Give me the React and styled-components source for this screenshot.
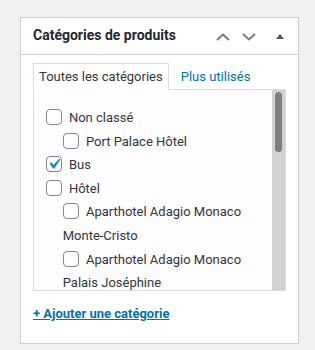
import React, { useState } from 'react'
import styled, { createGlobalStyle } from 'styled-components'

const categories = [
	{ name: 'Non classé', children: [{ name: 'Port Palace Hôtel' }] },
	{ name: 'Bus', checked: true },
	{
		name: 'Hôtel',
		children: [
			{ name: 'Aparthotel Adagio Monaco Monte-Cristo' },
			{ name: 'Aparthotel Adagio Monaco Palais Joséphine' },
			{ name: 'Columbus Monte-Carlo' },
			{ name: 'Fairmont Monte Carlo' },
			{ name: 'Hôtel Ambassador Monaco' },
			{ name: 'Hôtel de France' },
		],
	},
]

function CategoryItem({ item }) {
	const [checked, setChecked] = useState(!!item.checked)
	return (
		<Item>
			<label>
				<Check type="checkbox" checked={checked} onChange={() => setChecked(!checked)} /> {item.name}
			</label>
			{item.children && (
				<SubList>
					{item.children.map(child => <CategoryItem key={child.name} item={child} />)}
				</SubList>
			)}
		</Item>
	)
}

function App() {
	const [tab, setTab] = useState('all')
	return (
		<>
			<GlobalStyle />
			<Postbox>
				<Header>
					<Title>Catégories de produits</Title>
					<Handles>
						<HandleButton aria-label="Monter">
							<svg width="14" height="8" viewBox="0 0 14 8">
								<path d="M1 7 L7 1.5 L13 7" fill="none" stroke="#787c82" strokeWidth="2" />
							</svg>
						</HandleButton>
						<HandleButton aria-label="Descendre">
							<svg width="14" height="8" viewBox="0 0 14 8">
								<path d="M1 1 L7 6.5 L13 1" fill="none" stroke="#787c82" strokeWidth="2" />
							</svg>
						</HandleButton>
						<ToggleButton aria-label="Replier">
							<svg width="8" height="5" viewBox="0 0 8 5">
								<path d="M0 5 L4 0 L8 5 Z" fill="#50575e" />
							</svg>
						</ToggleButton>
					</Handles>
				</Header>
				<Inside>
					<Tabs>
						<Tab active={tab === 'all'} onClick={() => setTab('all')}>Toutes les catégories</Tab>
						<Tab active={tab === 'pop'} onClick={() => setTab('pop')}>Plus utilisés</Tab>
					</Tabs>
					<TabsPanel>
						<ListArea>
							<CheckList>
								{categories.map(item => <CategoryItem key={item.name} item={item} />)}
							</CheckList>
						</ListArea>
						<ScrollTrack>
							<ScrollThumb />
						</ScrollTrack>
					</TabsPanel>
					<AddLink href="#">+ Ajouter une catégorie</AddLink>
				</Inside>
			</Postbox>
		</>
	)
}

const GlobalStyle = createGlobalStyle`
	body {
		margin: 0;
		background: #f1f1f1;
		font-family: Roboto, "Liberation Sans", sans-serif;
		font-size: 13px;
		color: #3c434a;
	}
`

const Postbox = styled.div`
	margin: 17px 0 0 20px;
	width: 277px;
	height: 325px;
	background: #fff;
	border: 1px solid #ccd0d4;
	box-shadow: 0 1px 1px rgba(0, 0, 0, 0.04);
`

const Header = styled.div`
	display: flex;
	align-items: center;
	height: 36px;
	border-bottom: 1px solid #ccd0d4;
`

const Title = styled.h2`
	flex: 1;
	margin: 0;
	padding: 0 12px;
	font-size: 14px;
	font-weight: 700;
	color: #23282d;
	line-height: 1.4;
`

const Handles = styled.div`
	display: flex;
	align-items: center;
	padding-right: 14px;
	padding-top: 2px;
`

const HandleButton = styled.button`
	display: flex;
	align-items: center;
	justify-content: center;
	width: 26px;
	height: 20px;
	padding: 0;
	border: 0;
	background: none;
	cursor: pointer;
`

const ToggleButton = styled(HandleButton)`
	width: 8px;
	margin-left: 14px;
	margin-top: -1px;
`

const Inside = styled.div`
	padding: 8px 12px 0;
`

const Tabs = styled.ul`
	display: flex;
	align-items: flex-end;
	margin: 0;
	padding: 0;
	list-style: none;
`

const Tab = styled.li`
	padding: 4px 5px 5px;
	margin-right: 6px;
	line-height: 17px;
	font-size: 13px;
	border: 1px solid ${p => (p.active ? '#dcdcde' : 'transparent')};
	border-bottom: 0;
	background: ${p => (p.active ? '#fff' : 'transparent')};
	color: ${p => (p.active ? '#32373c' : '#0073aa')};
	margin-bottom: -1px;
	position: relative;
	cursor: pointer;
`

const TabsPanel = styled.div`
	display: flex;
	height: 200px;
	border: 1px solid #dcdcde;
	background: #fdfdfd;
`

const ListArea = styled.div`
	flex: 1;
	overflow: hidden;
	padding: 0 11.7px;
`

const ScrollTrack = styled.div`
	width: 13px;
	flex-shrink: 0;
	background: #d1d1d1;
	padding: 2px 3px;
	box-sizing: border-box;
`

const ScrollThumb = styled.div`
	width: 7px;
	height: 60px;
	border-radius: 4px;
	background: #808080;
`

const CheckList = styled.ul`
	margin: 0;
	padding: 16px 0 12px;
	list-style: none;
`

const SubList = styled.ul`
	margin: 0 0 0 17px;
	padding: 0;
	list-style: none;
`

const Item = styled.li`
	margin: 0;
	padding: 0;
	font-size: 13px;
	line-height: 23.6px;
	color: #32373c;
	label {
		cursor: pointer;
	}
`

const Check = styled.input`
	appearance: none;
	display: inline-block;
	vertical-align: middle;
	width: 16px;
	height: 16px;
	margin: -3px 4px 0 0;
	border: 1px solid #7e8993;
	border-radius: 4px;
	background: #fff;
	cursor: pointer;
	&:checked {
		background: #fff url("data:image/svg+xml,%3Csvg xmlns='http://www.w3.org/2000/svg' viewBox='0 0 20 20'%3E%3Cpath d='M14.83 4.89l1.34.94-5.81 8.38H9.02L5.78 9.67l1.34-1.25 2.57 2.4z' fill='%231e8cbe'/%3E%3C/svg%3E") center / 21px 21px no-repeat;
	}
`

const AddLink = styled.a`
	display: inline-block;
	margin-top: 15px;
	font-size: 13px;
	font-weight: 700;
	color: #0073aa;
	text-decoration: underline;
`

export default App
